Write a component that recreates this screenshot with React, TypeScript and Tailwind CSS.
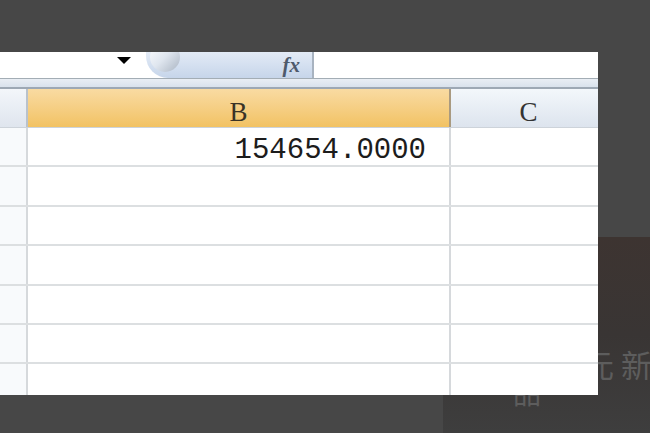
import React from "react";

const mono = { fontFamily: '"Liberation Mono", "DejaVu Sans Mono", monospace' };
const serif = { fontFamily: '"Liberation Serif", "DejaVu Serif", serif' };

function GridRow({ h, last }: { h: number; last?: boolean }) {
  return (
    <div
      className={`flex shrink-0 ${last ? "" : "border-b-2 border-[#dcdfe1]"}`}
      style={{ height: h }}
    >
      <div className="w-[28px] shrink-0 border-r-2 border-[#d6d9dc] bg-[#f8fafc]" />
      <div className="w-[423px] shrink-0 border-r-2 border-[#d6d9dc]" />
      <div className="flex-1" />
    </div>
  );
}

export default function App() {
  return (
    <div className="relative h-[433px] w-[650px] overflow-hidden bg-[#474747]">
      {/* window behind, lower right */}
      <div className="absolute left-[443px] top-[237px] h-[196px] w-[207px] bg-gradient-to-b from-[#3d3431] via-[#393534] to-[#3e3e3e]">
        <div
          className="absolute left-[140px] top-[111px] whitespace-nowrap text-[31px] leading-none text-[#5d5d5d]"
          style={{ fontFamily: '"Noto Sans CJK SC", sans-serif' }}
        >
          元 新
        </div>
        <div
          className="absolute left-[70px] top-[141px] whitespace-nowrap text-[28px] leading-none text-[#5d5d5d]"
          style={{ fontFamily: '"Noto Sans CJK SC", sans-serif' }}
        >
          品
        </div>
      </div>

      {/* spreadsheet panel */}
      <div className="relative z-10 mt-[52px] flex h-[343px] w-[598px] flex-col overflow-hidden bg-white">
        {/* formula bar */}
        <div className="flex h-[26px] shrink-0">
          <div className="relative w-[146px] shrink-0 bg-white">
            <div className="absolute left-[117px] top-[5px] h-0 w-0 border-l-[7px] border-r-[7px] border-t-[7px] border-l-transparent border-r-transparent border-t-black" />
          </div>
          <div className="relative flex w-[168px] shrink-0 items-center justify-end overflow-hidden rounded-bl-[22px] border-r-2 border-[#a8b3c0] bg-gradient-to-b from-[#e3ebf6] to-[#c6d5ea] pr-[12px]">
            <div className="absolute left-[4px] top-[-10px] h-[30px] w-[30px] rounded-full bg-gradient-to-br from-[#ffffff] via-[#dfe6ef] to-[#aab4c2]" />
            <span
              className="text-[21px] font-bold italic leading-none text-[#4e5a6c]"
              style={serif}
            >
              fx
            </span>
          </div>
          <div className="flex-1 bg-white" />
        </div>
        {/* separator band */}
        <div className="h-[1px] shrink-0 bg-[#a3adb5]" />
        <div className="h-[8px] shrink-0 bg-gradient-to-b from-[#e9eef4] to-[#d9e2ec]" />
        <div className="h-[2px] shrink-0 bg-[#9da8b4]" />
        {/* header row */}
        <div className="flex h-[39px] shrink-0 border-b border-[#cdd3da]" style={serif}>
          <div className="w-[28px] shrink-0 border-r-2 border-[#b9c2cc] bg-gradient-to-b from-[#f3f6fa] to-[#dfe5ee]" />
          <div className="flex w-[423px] shrink-0 items-end justify-center border-r-2 border-[#a99a80] bg-gradient-to-b from-[#f9dba2] to-[#f2c262] pb-[1px] text-[27px] leading-none text-[#3a3326]">
            B
          </div>
          <div className="flex flex-1 items-end justify-center bg-gradient-to-b from-[#f3f7fb] to-[#dde4ee] pb-[1px] pl-[8px] text-[27px] leading-none text-[#333]">
            C
          </div>
        </div>
        {/* row 1 */}
        <div className="flex h-[39px] shrink-0 border-b-2 border-[#dcdfe1]">
          <div className="w-[28px] shrink-0 border-r-2 border-[#d6d9dc] bg-[#f8fafc]" />
          <div
            className="flex w-[423px] shrink-0 items-center justify-end border-r-2 border-[#d6d9dc] pr-[23px] pt-[8px] text-[29px] leading-none text-[#1c1c1c]"
            style={mono}
          >
            154654.0000
          </div>
          <div className="flex-1" />
        </div>
        <GridRow h={40} />
        <GridRow h={39} />
        <GridRow h={40} />
        <GridRow h={39} />
        <GridRow h={39} />
        <GridRow h={40} last />
      </div>
    </div>
  );
}
